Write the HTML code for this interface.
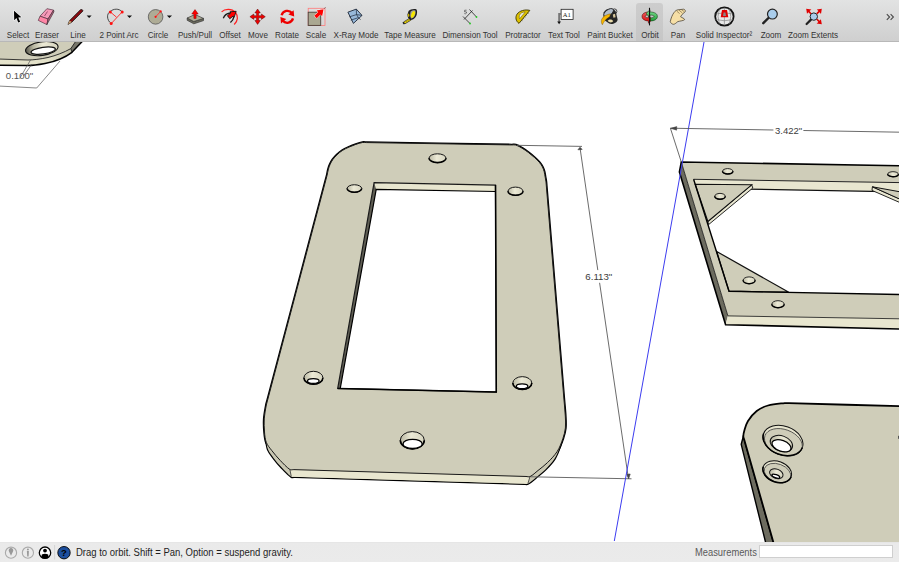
<!DOCTYPE html>
<html><head><meta charset="utf-8">
<style>
html,body{margin:0;padding:0;width:899px;height:562px;overflow:hidden;background:#fff;}
body{position:relative;font-family:"Liberation Sans",sans-serif;}
#tb{position:absolute;left:0;top:0;width:899px;height:42px;background:linear-gradient(#e2e3e3,#cfcfcf);border-bottom:1px solid #b8b8b8;box-sizing:border-box;}
.lb{position:absolute;top:30.2px;font-size:9px;color:#333;white-space:nowrap;transform:translateX(-50%) scaleX(0.9);line-height:10px;}
#sel{position:absolute;left:636.2px;top:3.4px;width:27.2px;height:37.6px;background:linear-gradient(#cdcdcd,#c6c6c6);border-radius:3px 3px 0 0;}
#sb{position:absolute;left:0;top:541.6px;width:899px;height:21px;background:linear-gradient(#e4e4e4,#eaeaea 1.5px,#ebebeb);}
#st{position:absolute;left:76.3px;top:547.3px;font-size:10px;color:#1e1e1e;white-space:nowrap;line-height:11px;transform:scaleX(0.95);transform-origin:0 0;}
#ms{position:absolute;left:694.8px;top:547.4px;font-size:10px;color:#5a5a5a;white-space:nowrap;line-height:11px;transform:scaleX(0.935);transform-origin:0 0;}
#mi{position:absolute;left:759px;top:544.5px;width:134px;height:13px;background:#fff;border:1px solid #cfcfcf;box-sizing:border-box;}
svg{position:absolute;left:0;top:0;}
</style></head><body>
<svg id="scene" width="899" height="562" viewBox="0 0 899 562" font-family="Liberation Sans">
<defs>
<linearGradient id="hg" x1="0" y1="0" x2="1" y2="0">
<stop offset="0" stop-color="#b9b7a2"/><stop offset="0.45" stop-color="#ecead6"/><stop offset="1" stop-color="#d6d4bf"/>
</linearGradient>
<linearGradient id="hg2" x1="0" y1="0" x2="1" y2="0"><stop offset="0" stop-color="#55544a"/><stop offset="0.25" stop-color="#b8b6a0"/><stop offset="0.55" stop-color="#ecead6"/><stop offset="1" stop-color="#d6d4bf"/></linearGradient>
<linearGradient id="fg" x1="0" y1="0" x2="1" y2="0">
<stop offset="0" stop-color="#d9d7c0"/><stop offset="0.1" stop-color="#e8e6cf"/><stop offset="0.9" stop-color="#e8e6cf"/><stop offset="1" stop-color="#c9c7b2"/>
</linearGradient>
</defs>
<defs><linearGradient id="bandg" x1="0" y1="0" x2="1" y2="0"><stop offset="0" stop-color="#e6e4cc"/><stop offset="0.6" stop-color="#e2e0c8"/><stop offset="1" stop-color="#b8b6a0"/></linearGradient></defs>
<path d="M-2,41.5 L82.2,41.5 L72,52.3 C65,57.5 55,61.5 45,63.5 C38,64.8 32,65.5 28,65.5 L-2,65.2 Z" fill="url(#bandg)"/>
<path d="M-2,41.5 L75.6,41.5 L70.8,48.6 C64,52.5 56,55.5 48,57.5 C40,59.2 33,60 28,60 L-2,59 Z" fill="#cfcdb9"/>
<path d="M75.6,41.5 L82.2,41.5 L72,52.3 L70.8,48.6 Z" fill="#77766a"/>
<path d="M-2,59 L28,60 C33,60 40,59.2 48,57.5 C56,55.5 64,52.5 70.8,48.6 L75.6,41.5 M70.8,48.6 L72,52.3" fill="none" stroke="#222" stroke-width="0.9"/>
<path d="M-2,65.2 L28,65.5 C32,65.5 38,64.8 45,63.5 C55,61.5 65,57.5 72,52.3 L82.2,41.5" fill="none" stroke="#000" stroke-width="1.5"/>
<ellipse cx="41.8" cy="48.6" rx="16.4" ry="6.8" transform="rotate(-8 41.8 48.6)" fill="url(#hg2)" stroke="#111" stroke-width="1.1"/>
<ellipse cx="43.2" cy="50.6" rx="12.3" ry="3.3" transform="rotate(-8 43.2 50.6)" fill="#fff" stroke="#111" stroke-width="1.2"/>
<path d="M30.5,60 L19.6,78.6 M32,64 L23.5,76 M60,61 L36.7,88 L-2,86" fill="none" stroke="#555" stroke-width="0.7"/>
<text x="5.8" y="79" font-size="9.6" fill="#555">0.100"</text>
<path d="M362.50,142.50 C363.80,142.28 365.17,142.54 366.50,142.57 C414.93,143.36 463.37,144.14 511.80,144.93 C513.13,144.96 514.56,144.61 515.80,145.00 C517.99,145.69 520.08,147.00 522.10,148.20 C524.28,149.50 526.37,150.97 528.40,152.50 C530.54,154.11 532.61,155.81 534.60,157.60 C536.25,159.08 537.88,160.61 539.30,162.30 C540.51,163.74 541.63,165.33 542.50,167.00 C543.26,168.47 543.78,170.10 544.20,171.70 C544.68,173.50 544.88,175.36 545.20,177.20 C545.48,178.76 545.80,180.33 546.00,181.90 C546.17,183.22 546.22,184.56 546.33,185.89 C552.11,255.93 557.89,325.97 563.67,396.01 C563.78,397.34 563.89,398.67 564.00,400.00 C564.43,405.33 565.03,410.66 565.30,416.00 C565.50,419.99 565.82,424.05 565.40,428.00 C565.02,431.55 564.08,435.11 562.90,438.50 C561.38,442.88 559.78,447.42 557.30,451.30 C554.68,455.42 551.09,459.03 547.60,462.50 C544.66,465.43 541.25,467.90 538.00,470.50 C535.38,472.60 532.86,475.17 530.00,476.60 C528.86,477.17 527.33,476.52 526.00,476.48 C448.63,474.19 371.27,471.91 293.90,469.62 C292.57,469.58 290.96,470.21 289.90,469.50 C286.39,467.14 283.26,463.60 280.20,460.40 C277.26,457.33 274.50,454.06 271.90,450.70 C269.86,448.06 267.50,445.43 266.30,442.40 C265.03,439.20 264.81,435.49 264.50,432.00 C264.11,427.66 263.91,423.24 264.20,418.90 C264.51,414.24 265.49,409.61 266.30,405.00 C266.53,403.69 266.98,402.42 267.32,401.13 C286.91,327.11 306.49,253.09 326.08,179.07 C326.42,177.78 326.80,176.50 327.10,175.20 C327.57,173.18 327.84,171.10 328.40,169.10 C328.84,167.50 329.40,165.91 330.10,164.40 C330.87,162.74 331.74,161.08 332.80,159.60 C334.00,157.92 335.40,156.33 336.90,154.90 C338.57,153.30 340.36,151.75 342.30,150.50 C344.39,149.15 346.72,148.13 349.00,147.10 C351.22,146.10 353.49,145.19 355.80,144.40 C357.99,143.65 360.23,142.89 362.50,142.50 Z" fill="none" stroke="#000" stroke-width="2.6"/>
<path d="M362.81,149.70 C364.09,149.48 365.44,149.74 366.75,149.77 C414.46,150.56 462.17,151.34 509.87,152.13 C511.19,152.16 512.59,151.81 513.81,152.20 C515.97,152.90 518.03,154.20 520.02,155.40 C522.17,156.70 524.23,158.17 526.22,159.70 C528.33,161.31 530.37,163.01 532.33,164.80 C533.95,166.28 535.56,167.81 536.96,169.50 C538.16,170.95 539.26,172.53 540.11,174.20 C540.87,175.67 541.37,177.30 541.79,178.90 C542.26,180.70 542.45,182.57 542.77,184.40 C543.04,185.97 543.36,187.53 543.56,189.10 C543.73,190.42 543.78,191.76 543.88,193.09 C549.58,263.13 555.27,333.17 560.97,403.21 C561.07,404.54 561.18,405.87 561.29,407.20 C561.72,412.53 562.31,417.86 562.57,423.20 C562.77,427.19 563.08,431.25 562.67,435.20 C562.30,438.75 561.37,442.31 560.21,445.70 C558.71,450.08 557.13,454.61 554.69,458.50 C552.11,462.61 548.58,466.22 545.14,469.70 C542.24,472.62 538.88,475.10 535.68,477.70 C533.10,479.80 530.62,482.37 527.80,483.80 C526.68,484.36 525.17,483.72 523.86,483.68 C447.65,481.39 371.45,479.11 295.24,476.82 C293.93,476.78 292.34,477.41 291.30,476.70 C287.84,474.33 284.76,470.79 281.75,467.60 C278.85,464.53 276.13,461.26 273.57,457.90 C271.56,455.26 269.24,452.63 268.06,449.60 C266.81,446.39 266.59,442.69 266.28,439.20 C265.90,434.86 265.70,430.44 265.99,426.10 C266.29,421.44 267.26,416.81 268.06,412.20 C268.28,410.89 268.73,409.62 269.06,408.33 C288.35,334.31 307.64,260.29 326.94,186.27 C327.27,184.98 327.65,183.70 327.94,182.40 C328.41,180.38 328.68,178.30 329.22,176.30 C329.66,174.70 330.21,173.11 330.90,171.60 C331.66,169.94 332.51,168.29 333.56,166.80 C334.74,165.12 336.12,163.53 337.60,162.10 C339.24,160.50 341.00,158.95 342.92,157.70 C344.97,156.35 347.27,155.33 349.51,154.30 C351.70,153.30 353.94,152.39 356.21,151.60 C358.37,150.85 360.58,150.09 362.81,149.70 Z" fill="none" stroke="#000" stroke-width="2.4"/>
<path d="M362.81,149.70 C364.09,149.48 365.44,149.74 366.75,149.77 C414.46,150.56 462.17,151.34 509.87,152.13 C511.19,152.16 512.59,151.81 513.81,152.20 C515.97,152.90 518.03,154.20 520.02,155.40 C522.17,156.70 524.23,158.17 526.22,159.70 C528.33,161.31 530.37,163.01 532.33,164.80 C533.95,166.28 535.56,167.81 536.96,169.50 C538.16,170.95 539.26,172.53 540.11,174.20 C540.87,175.67 541.37,177.30 541.79,178.90 C542.26,180.70 542.45,182.57 542.77,184.40 C543.04,185.97 543.36,187.53 543.56,189.10 C543.73,190.42 543.78,191.76 543.88,193.09 C549.58,263.13 555.27,333.17 560.97,403.21 C561.07,404.54 561.18,405.87 561.29,407.20 C561.72,412.53 562.31,417.86 562.57,423.20 C562.77,427.19 563.08,431.25 562.67,435.20 C562.30,438.75 561.37,442.31 560.21,445.70 C558.71,450.08 557.13,454.61 554.69,458.50 C552.11,462.61 548.58,466.22 545.14,469.70 C542.24,472.62 538.88,475.10 535.68,477.70 C533.10,479.80 530.62,482.37 527.80,483.80 C526.68,484.36 525.17,483.72 523.86,483.68 C447.65,481.39 371.45,479.11 295.24,476.82 C293.93,476.78 292.34,477.41 291.30,476.70 C287.84,474.33 284.76,470.79 281.75,467.60 C278.85,464.53 276.13,461.26 273.57,457.90 C271.56,455.26 269.24,452.63 268.06,449.60 C266.81,446.39 266.59,442.69 266.28,439.20 C265.90,434.86 265.70,430.44 265.99,426.10 C266.29,421.44 267.26,416.81 268.06,412.20 C268.28,410.89 268.73,409.62 269.06,408.33 C288.35,334.31 307.64,260.29 326.94,186.27 C327.27,184.98 327.65,183.70 327.94,182.40 C328.41,180.38 328.68,178.30 329.22,176.30 C329.66,174.70 330.21,173.11 330.90,171.60 C331.66,169.94 332.51,168.29 333.56,166.80 C334.74,165.12 336.12,163.53 337.60,162.10 C339.24,160.50 341.00,158.95 342.92,157.70 C344.97,156.35 347.27,155.33 349.51,154.30 C351.70,153.30 353.94,152.39 356.21,151.60 C358.37,150.85 360.58,150.09 362.81,149.70 Z" fill="#c9c7b2"/>
<path d="M289.9,469.5 L530,476.6 L527.8,483.8 L291.3,476.7 Z" fill="#e8e6cf"/>
<path d="M289.9,469.5 L291.3,476.7 M530,476.6 L527.8,483.8" stroke="#333" stroke-width="0.8"/>
<path d="M362.50,142.50 C363.80,142.28 365.17,142.54 366.50,142.57 C414.93,143.36 463.37,144.14 511.80,144.93 C513.13,144.96 514.56,144.61 515.80,145.00 C517.99,145.69 520.08,147.00 522.10,148.20 C524.28,149.50 526.37,150.97 528.40,152.50 C530.54,154.11 532.61,155.81 534.60,157.60 C536.25,159.08 537.88,160.61 539.30,162.30 C540.51,163.74 541.63,165.33 542.50,167.00 C543.26,168.47 543.78,170.10 544.20,171.70 C544.68,173.50 544.88,175.36 545.20,177.20 C545.48,178.76 545.80,180.33 546.00,181.90 C546.17,183.22 546.22,184.56 546.33,185.89 C552.11,255.93 557.89,325.97 563.67,396.01 C563.78,397.34 563.89,398.67 564.00,400.00 C564.43,405.33 565.03,410.66 565.30,416.00 C565.50,419.99 565.82,424.05 565.40,428.00 C565.02,431.55 564.08,435.11 562.90,438.50 C561.38,442.88 559.78,447.42 557.30,451.30 C554.68,455.42 551.09,459.03 547.60,462.50 C544.66,465.43 541.25,467.90 538.00,470.50 C535.38,472.60 532.86,475.17 530.00,476.60 C528.86,477.17 527.33,476.52 526.00,476.48 C448.63,474.19 371.27,471.91 293.90,469.62 C292.57,469.58 290.96,470.21 289.90,469.50 C286.39,467.14 283.26,463.60 280.20,460.40 C277.26,457.33 274.50,454.06 271.90,450.70 C269.86,448.06 267.50,445.43 266.30,442.40 C265.03,439.20 264.81,435.49 264.50,432.00 C264.11,427.66 263.91,423.24 264.20,418.90 C264.51,414.24 265.49,409.61 266.30,405.00 C266.53,403.69 266.98,402.42 267.32,401.13 C286.91,327.11 306.49,253.09 326.08,179.07 C326.42,177.78 326.80,176.50 327.10,175.20 C327.57,173.18 327.84,171.10 328.40,169.10 C328.84,167.50 329.40,165.91 330.10,164.40 C330.87,162.74 331.74,161.08 332.80,159.60 C334.00,157.92 335.40,156.33 336.90,154.90 C338.57,153.30 340.36,151.75 342.30,150.50 C344.39,149.15 346.72,148.13 349.00,147.10 C351.22,146.10 353.49,145.19 355.80,144.40 C357.99,143.65 360.23,142.89 362.50,142.50 Z" fill="#cfcdb9" stroke="#1a1a1a" stroke-width="1.0"/>
<path d="M374.1,182.7 L495.5,185.1 L496.3,392.1 L337.7,388.4 Z" fill="#fff"/>
<path d="M374.1,182.7 L495.5,185.1 L495.6,191.5 L375.5,189.4 Z" fill="#e8e6cf"/>
<path d="M374.1,182.7 L376.2,189.4 L340.2,388.6 L337.7,388.4 Z" fill="#5f5e54"/>
<path d="M375.5,189.4 L495.6,191.5 M376.2,189.4 L340.2,388.6" fill="none" stroke="#000" stroke-width="1.2"/>
<path d="M374.1,182.7 L495.5,185.1 L496.3,392.1 L337.7,388.4 Z" fill="none" stroke="#1a1a1a" stroke-width="1.2"/>
<path d="M337.7,388.4 L496.3,392.1 L495.5,185.1" fill="none" stroke="#000" stroke-width="1.5"/>
<ellipse cx="437.5" cy="158.2" rx="8.5" ry="4.4" fill="url(#hg)" stroke="#151515" stroke-width="1.0"/><path d="M429.0,158.2 A8.5,4.4 0 0 0 446.0,158.2" fill="none" stroke="#000" stroke-width="1.6"/>
<ellipse cx="354.4" cy="188.5" rx="7.3" ry="3.75" fill="url(#hg)" stroke="#151515" stroke-width="1.0"/><path d="M347.09999999999997,188.5 A7.3,3.75 0 0 0 361.7,188.5" fill="none" stroke="#000" stroke-width="1.6"/>
<ellipse cx="515.5" cy="191.2" rx="7.5" ry="4.1" fill="url(#hg)" stroke="#151515" stroke-width="1.0"/><path d="M508.0,191.2 A7.5,4.1 0 0 0 523.0,191.2" fill="none" stroke="#000" stroke-width="1.6"/>
<ellipse cx="313.4" cy="377.8" rx="9.5" ry="6.5" fill="url(#hg)" stroke="#151515" stroke-width="1.0"/><path d="M303.9,377.8 A9.5,6.5 0 0 0 322.9,377.8" fill="none" stroke="#000" stroke-width="1.6"/><ellipse cx="313.3" cy="381.0" rx="5.8" ry="2.4" fill="#fff" stroke="#000" stroke-width="1.3"/>
<ellipse cx="522.3" cy="383.1" rx="9.5" ry="6.45" fill="url(#hg)" stroke="#151515" stroke-width="1.0"/><path d="M512.8,383.1 A9.5,6.45 0 0 0 531.8,383.1" fill="none" stroke="#000" stroke-width="1.6"/><ellipse cx="522.1" cy="386.3" rx="5.8" ry="2.4" fill="#fff" stroke="#000" stroke-width="1.3"/>
<ellipse cx="412.3" cy="440.3" rx="12" ry="8.7" fill="url(#hg)" stroke="#151515" stroke-width="1.0"/><path d="M400.3,440.3 A12,8.7 0 0 0 424.3,440.3" fill="none" stroke="#000" stroke-width="1.6"/><ellipse cx="412.6" cy="443.9" rx="9.6" ry="4.6" fill="#fff" stroke="#000" stroke-width="1.3"/>
<g stroke="#5a5a5a" stroke-width="0.9" fill="none">
<path d="M517,145.3 L582,146.4 M531,476.8 L631.5,478.8"/>
<path d="M580.2,149 L597.8,270.1 M599.6,282.8 L628.2,477"/>
</g>
<path d="M580,147.2 L577.9,149.8 L582.2,149.4 Z M628.6,479 L626.8,474.3 L630.2,474 Z" fill="#444" stroke="#444" stroke-width="0.6"/>
<text x="585.3" y="280" font-size="9.7" fill="#3c3c3c">6.113"</text>
<path d="M681.3,162.0 L727.9,315.9 L725.6,324.7 L679.4,172.0 Z" fill="#6c6b5f"/>
<path d="M727.9,315.9 L900.0,318.8 L900.0,329.0 L725.6,324.7 Z" fill="#e8e6cf"/>
<path d="M681.3,162.0 L900.0,165.8 L900.0,318.8 L727.9,315.9 Z M693.6,179.3 L900.0,182.6 L900.0,294.5 L729.0,291.2 Z" fill="#cfcdb9" fill-rule="evenodd"/>
<path d="M681.3,162.0 L727.9,315.9 L900,318.8" fill="none" stroke="#111" stroke-width="0.8"/>
<path d="M900,165.8 L681.3,162 L679.4,172 L725.6,324.7 L900,329" fill="none" stroke="#000" stroke-width="1.6"/>
<path d="M693.6,179.3 L900.0,182.6 L900.0,191.8 L696.4,188.3 Z" fill="#e8e6d0"/>
<path d="M696.4,188.3 L900,191.8" fill="none" stroke="#111" stroke-width="1.2"/>
<path d="M751.7,184.8 L707.9,221.5 L708.6,224.6 L752.8,188.0 Z" fill="#e8e6d0" stroke="#111" stroke-width="0.9"/>
<path d="M695.2,184.2 L751.7,184.8 L707.9,221.5 Z" fill="#cfcdb9" stroke="#111" stroke-width="1.1"/>
<path d="M716.7,251.5 L729.0,291.2 L788.8,292.2 Z" fill="#cfcdb9" stroke="#111" stroke-width="1.2"/>
<path d="M900,182.6 L693.6,179.3" fill="none" stroke="#222" stroke-width="1"/><path d="M693.6,179.3 L729.0,291.2 L900,294.5" fill="none" stroke="#000" stroke-width="1.4"/>
<path d="M872.4,186.8 L900.0,199.2 L900.0,202.6 L872.0,190.4 Z" fill="#e8e6d0" stroke="#111" stroke-width="0.9"/>
<path d="M872.4,186.8 L900.0,191.8 L900.0,199.2 Z" fill="#cfcdb9" stroke="#111" stroke-width="1"/>
<ellipse cx="727.7" cy="171.3" rx="5.2" ry="2.7" fill="url(#hg)" stroke="#151515" stroke-width="0.9"/><path d="M722.5,171.3 A5.2,2.7 0 0 0 732.9000000000001,171.3" fill="none" stroke="#000" stroke-width="1.4400000000000002"/>
<ellipse cx="893" cy="174.2" rx="5.4" ry="2.5" fill="url(#hg)" stroke="#151515" stroke-width="0.9"/><path d="M887.6,174.2 A5.4,2.5 0 0 0 898.4,174.2" fill="none" stroke="#000" stroke-width="1.4400000000000002"/>
<ellipse cx="720" cy="196.3" rx="5.3" ry="2.9" fill="url(#hg)" stroke="#151515" stroke-width="0.9"/><path d="M714.7,196.3 A5.3,2.9 0 0 0 725.3,196.3" fill="none" stroke="#000" stroke-width="1.4400000000000002"/>
<ellipse cx="749.1" cy="280.3" rx="6" ry="3.4" fill="url(#hg)" stroke="#151515" stroke-width="0.9"/><path d="M743.1,280.3 A6,3.4 0 0 0 755.1,280.3" fill="none" stroke="#000" stroke-width="1.4400000000000002"/>
<ellipse cx="778" cy="304.2" rx="6.2" ry="3.5" fill="url(#hg)" stroke="#151515" stroke-width="0.9"/><path d="M771.8,304.2 A6.2,3.5 0 0 0 784.2,304.2" fill="none" stroke="#000" stroke-width="1.4400000000000002"/>
<path d="M743.3,436.3 L775.0,548.0 L767.0,548.0 L741.2,444.3 Z" fill="#6d6c5f" stroke="#000" stroke-width="1.4"/>
<path d="M905.00,406.30 C866.33,405.27 827.67,404.23 789.00,403.20 C787.57,403.16 786.12,402.94 784.70,403.10 C779.12,403.71 773.35,403.99 768.00,405.50 C764.02,406.62 759.94,408.49 756.70,411.00 C753.28,413.65 750.35,417.34 748.00,421.00 C746.29,423.67 745.44,426.94 744.50,430.00 C743.87,432.04 743.32,434.22 743.30,436.30 C743.29,437.60 744.03,438.87 744.39,440.15 C754.23,474.82 764.07,509.48 773.91,544.15 C774.27,545.43 774.64,546.72 775.00,548.00 L905,548 Z" fill="#cfcdb9" stroke="#000" stroke-width="1.8"/>
<ellipse cx="783" cy="440.5" rx="20.6" ry="14.4" transform="rotate(20 783 440.5)" fill="#e6e4ce" stroke="#111" stroke-width="1"/><ellipse cx="783.4" cy="442.3" rx="19.6" ry="12.8" transform="rotate(20 783.4 442.3)" fill="#cfcdb9" stroke="#333" stroke-width="0.7"/><path d="M762.4,440.5 A20.6,14.4 0 0 0 803.6,440.5" transform="rotate(20 783 440.5)" fill="none" stroke="#000" stroke-width="1.5"/><ellipse cx="781.4" cy="443.5" rx="11.6" ry="7.6" transform="rotate(20 781.4 443.5)" fill="url(#hg)" stroke="#111" stroke-width="1"/><ellipse cx="781.5" cy="445.8" rx="10" ry="5.4" transform="rotate(20 781.5 445.8)" fill="#fff" stroke="#000" stroke-width="1.3"/>
<ellipse cx="777.2" cy="471.7" rx="14.8" ry="10.4" transform="rotate(20 777.2 471.7)" fill="#e6e4ce" stroke="#111" stroke-width="1"/><ellipse cx="777.5" cy="473" rx="13.8" ry="9" transform="rotate(20 777.5 473)" fill="#cfcdb9" stroke="#333" stroke-width="0.7"/><path d="M762.4000000000001,471.7 A14.8,10.4 0 0 0 792.0,471.7" transform="rotate(20 777.2 471.7)" fill="none" stroke="#000" stroke-width="1.5"/><ellipse cx="776.3" cy="473.7" rx="7" ry="4.6" transform="rotate(20 776.3 473.7)" fill="url(#hg)" stroke="#111" stroke-width="1"/><ellipse cx="775.8" cy="476.2" rx="4.1" ry="1.6" transform="rotate(20 775.8 476.2)" fill="#fff" stroke="#000" stroke-width="1.3"/>
<rect x="898" y="435.8" width="1.2" height="3" fill="#555"/>
<path d="M704.2,41 L614.3,541" stroke="#3c3cf0" stroke-width="1" fill="none"/>
<g stroke="#5a5a5a" stroke-width="0.9" fill="none">
<path d="M670.4,128.2 L773.4,130 M803.4,130.5 L900,132.2 M670.4,128.2 L681.3,162"/>
</g>
<path d="M670.6,128.3 L676.8,126.6 L676.6,130.2 Z" fill="#444" stroke="#444" stroke-width="0.5"/>
<text x="775" y="133.5" font-size="9.5" fill="#3c3c3c">3.422"</text>
</svg>
<div id="tb"></div>
<div id="sel"></div>
<div class="lb" style="left:17.5px">Select</div>
<div class="lb" style="left:46.5px">Eraser</div>
<div class="lb" style="left:77.5px">Line</div>
<div class="lb" style="left:118.5px">2 Point Arc</div>
<div class="lb" style="left:157.5px">Circle</div>
<div class="lb" style="left:195px">Push/Pull</div>
<div class="lb" style="left:229.5px">Offset</div>
<div class="lb" style="left:257.5px">Move</div>
<div class="lb" style="left:286.5px">Rotate</div>
<div class="lb" style="left:316px">Scale</div>
<div class="lb" style="left:355.5px">X-Ray Mode</div>
<div class="lb" style="left:409.5px">Tape Measure</div>
<div class="lb" style="left:469.5px">Dimension Tool</div>
<div class="lb" style="left:522.5px">Protractor</div>
<div class="lb" style="left:563.5px">Text Tool</div>
<div class="lb" style="left:609.5px">Paint Bucket</div>
<div class="lb" style="left:650px">Orbit</div>
<div class="lb" style="left:677.5px">Pan</div>
<div class="lb" style="left:724px">Solid Inspector²</div>
<div class="lb" style="left:770.5px">Zoom</div>
<div class="lb" style="left:813px">Zoom Extents</div>
<svg width="899" height="41" viewBox="0 0 899 41" style="position:absolute;left:0;top:0">
<defs>
<linearGradient id="selg" x1="0" y1="0" x2="0" y2="1"><stop offset="0" stop-color="#d2d2d2"/><stop offset="1" stop-color="#c3c3c3"/></linearGradient>
</defs>
<!-- Select -->
<path d="M14,10.8 L14.2,20.2 L16.5,18.1 L18.2,22.6 L20.1,21.8 L18.3,17.4 L21.4,17.2 Z" fill="#fff" stroke="#fff" stroke-width="1.2" stroke-linejoin="round" opacity="0.8"/>
<path d="M14,10.8 L14.2,20.2 L16.5,18.1 L18.2,22.6 L20.1,21.8 L18.3,17.4 L21.4,17.2 Z" fill="#000"/>
<!-- Eraser -->
<path d="M40,16.2 L46.9,8.7 L53.6,10.1 L48,19 Z" fill="#f49ab8" stroke="#503040" stroke-width="0.7"/>
<path d="M40,16.2 L48,19 L46.9,24.6 L38.3,20.4 Z" fill="#ff86a6" stroke="#503040" stroke-width="0.7"/>
<path d="M48,19 L53.6,10.1 L53.9,11.8 L46.9,24.6 Z" fill="#c06080" stroke="#403038" stroke-width="0.7"/>
<path d="M47.5,11.5 L44.5,16" stroke="#a05070" stroke-width="1"/>
<!-- Line pencil -->
<path d="M68,24.4 L69.6,20.6 L80.6,9.6 Q82.6,9.2 83,10.9 L72,22 Z" fill="#8a0a10" stroke="#1a1a1a" stroke-width="0.8" stroke-linejoin="round"/>
<path d="M68,24.4 L69.6,20.6 L71.8,22 Z" fill="#c8a070"/>
<path d="M86.6,15.6 L91.6,15.6 L89.1,18 Z" fill="#111"/>
<!-- 2 point arc -->
<path d="M111.2,23.6 C106.5,20 106.5,13.5 110.3,11.5 C113.5,8.5 119,8.2 122.2,11.9" fill="none" stroke="#222" stroke-width="0.8"/>
<path d="M110.3,11.9 L116.6,17.3 M122.2,11.9 L111.2,23.6" stroke="#ff2020" stroke-width="0.9"/>
<circle cx="110.3" cy="11.9" r="1.5" fill="#ff1010"/><circle cx="122.2" cy="11.9" r="1.5" fill="#ff1010"/><circle cx="111.2" cy="23.6" r="1.5" fill="#ff1010"/>
<path d="M127,15.6 L132,15.6 L129.5,18 Z" fill="#111"/>
<!-- Circle -->
<circle cx="155.6" cy="16.85" r="7.3" fill="#aeac96" stroke="#555" stroke-width="0.8"/>
<path d="M155.6,16.85 L160.7,11.4" stroke="#ff3030" stroke-width="0.9"/>
<circle cx="155.6" cy="16.85" r="1.1" fill="#ff1010"/><circle cx="160.7" cy="11.4" r="1.1" fill="#ff1010"/>
<path d="M166.9,15.6 L172,15.6 L169.4,18 Z" fill="#111"/>
<!-- Push/Pull -->
<path d="M187.2,18 L193.8,21.5 L203.5,18.4 L203.5,20.6 L193.8,23.8 L187.2,20.3 Z" fill="#6b6a5c" stroke="#333" stroke-width="0.7"/>
<path d="M187.2,18 L195,14.5 L203.5,18.4 L193.8,21.5 Z" fill="#aeac96" stroke="#333" stroke-width="0.7"/>
<path d="M193.9,18.4 L193.9,14 L191.8,14 L195,9.6 L198.2,14 L196.1,14 L196.1,18.4 Z" fill="#ff0000" stroke="#800" stroke-width="0.5"/>
<!-- Offset -->
<path d="M221.6,11.9 C224.6,8.9 231.4,7.9 235.6,12.6 C238.2,15.6 238.2,21 234.2,24.5" fill="none" stroke="#ff2020" stroke-width="1.2"/>
<path d="M223.3,18.3 Q225,13.8 230,13 M230.4,22.4 Q233.4,20 233.8,16.8" fill="none" stroke="#1a1a1a" stroke-width="1.3"/>
<path d="M0,-1.9 L4.4,-1.9 L4.4,-3.4 L9.6,0 L4.4,3.4 L4.4,1.9 L0,1.9 Z" transform="translate(228.6,17.2) rotate(-38)" fill="#ff0000" stroke="#111" stroke-width="0.8" stroke-linejoin="round"/>
<!-- Move -->
<path d="M257.6,9 L260.3,12.9 L258.65,12.9 L258.65,15.65 L261.4,15.65 L261.4,14 L265.3,16.7 L261.4,19.4 L261.4,17.75 L258.65,17.75 L258.65,20.5 L260.3,20.5 L257.6,24.4 L254.9,20.5 L256.55,20.5 L256.55,17.75 L253.8,17.75 L253.8,19.4 L249.9,16.7 L253.8,14 L253.8,15.65 L256.55,15.65 L256.55,12.9 L254.9,12.9 Z" fill="#f00000" stroke="#4a0000" stroke-width="0.45" stroke-linejoin="round"/>
<!-- Rotate -->
<path d="M281.6,15.2 A6,6 0 0 1 292,13" fill="none" stroke="#ee0000" stroke-width="2.3"/>
<path d="M293.6,10.2 L294.2,16.6 L288.4,14.6 Z" fill="#ee0000"/>
<path d="M293,18.4 A6,6 0 0 1 282.6,20.6" fill="none" stroke="#ee0000" stroke-width="2.3"/>
<path d="M281,23.4 L280.4,17 L286.2,19 Z" fill="#ee0000"/>
<!-- Scale -->
<rect x="308.2" y="8.3" width="16.8" height="17.1" fill="none" stroke="#ff7a7a" stroke-width="0.8"/>
<rect x="308.2" y="12.2" width="12.5" height="13.2" fill="#aaa892" stroke="#4a4038" stroke-width="0.9"/>
<path d="M0,-1.7 L5.2,-1.7 L5.2,-4 L11,0 L5.2,4 L5.2,1.7 L0,1.7 Z" transform="translate(315.6,17) rotate(-44)" fill="#ff0000" stroke="#fff" stroke-width="0.9" stroke-linejoin="round"/><path d="M0,-1.7 L5.2,-1.7 L5.2,-4 L11,0 L5.2,4 L5.2,1.7 L0,1.7 Z" transform="translate(315.6,17) rotate(-44)" fill="#ff0000"/><path d="M324.4,8.4 L325.2,7.6" stroke="#111" stroke-width="1"/>
<!-- X-Ray -->
<path d="M347.9,12.2 L356.3,9.1 L362,15.4 L353.4,23.4 Z" fill="#98b9da" stroke="#1e2838" stroke-width="0.9" stroke-linejoin="round"/>
<path d="M356.3,9.1 L356.5,14.6 M349.2,16.9 L356.5,14.6 L362,15.4 M350.8,20.2 L358.4,17.6 L360.6,19.6 M356.5,14.6 L358.4,17.6" fill="none" stroke="#1e2838" stroke-width="0.7"/>
<!-- Tape -->
<path d="M409.4,18.4 L410.9,20.2 L405,23.8 L403.5,22 Z" fill="#f0d800" stroke="#111" stroke-width="0.6"/>
<path d="M405.6,20.8 L407,22.5 M407.4,19.7 L408.8,21.4" stroke="#333" stroke-width="0.5"/>
<path d="M403.5,22 L405,23.8 L403.9,24.6 L402.4,22.8 Z" fill="#111"/>
<path d="M408.6,11 C409.8,9.2 414.6,8.4 416.5,9.4 C417.6,10.8 417,15 415.6,17 C414.2,19 411.6,20.3 410.2,19.9 C408.5,19.3 407.3,16.6 407.5,14.5 Z" fill="#1e1e1e"/>
<path d="M410.6,11.6 C411.9,10.4 414.5,10 415.4,10.6 C415.9,11.8 415.5,14.6 414.5,16.2 C413.5,17.8 411.7,18.7 411,18.4 C410.2,17.6 409.9,13.9 410.6,11.6 Z" fill="#a0a0a0"/>
<ellipse cx="413" cy="14.4" rx="1.7" ry="3.5" transform="rotate(22 413 14.4)" fill="#f4e600"/>
<ellipse cx="408.6" cy="15.2" rx="0.8" ry="1.8" fill="#c8b400"/>
<!-- Dimension -->
<path d="M463,16.5 L470,23.5 M469.5,9.5 L476.5,17 M464,19.5 L472.5,10.5" fill="none" stroke="#222" stroke-width="0.8"/>
<circle cx="470" cy="23.5" r="0.9" fill="#22cc22"/><circle cx="476.5" cy="17" r="0.9" fill="#22cc22"/>
<path d="M466.6,10.2 L464.7,10.2 L464.5,11.8 Q467,11.3 466.6,13 Q466.2,14.2 464.3,13.6" fill="none" stroke="#333" stroke-width="0.6"/>
<!-- Protractor -->
<path d="M519,23.4 L529.8,10.4 C525,9.2 519.5,10.6 517,14.2 C515.2,17 515.6,21 519,23.4 Z" fill="#dcc000" stroke="#3a3300" stroke-width="0.9" stroke-linejoin="round"/>
<path d="M519.6,18.8 L525.2,11.9 C522.4,12 520.2,13.4 519.5,15.2 C519.1,16.4 519.2,17.8 519.6,18.8 Z" fill="#ecebe2" stroke="#5a5000" stroke-width="0.5"/>
<path d="M521.5,20 L522.6,20.8 M523,18.2 L524.1,19 M524.5,16.4 L525.6,17.2 M526,14.6 L527.1,15.4 M527.5,12.8 L528.6,13.6" stroke="#4a4000" stroke-width="0.5"/>
<!-- Text tool -->
<rect x="561.1" y="9.3" width="12" height="10.1" fill="#fff" stroke="#222" stroke-width="0.8"/>
<text x="562.8" y="16.7" font-size="6.6" font-family="Liberation Serif" fill="#222">A1</text>
<path d="M561,14 L559.1,14 L559.1,22.2" fill="none" stroke="#777" stroke-width="1.8"/>
<path d="M557.2,21.6 L561,21.6 L559.1,24.2 Z" fill="#111"/>
<!-- Paint bucket -->
<path d="M603.8,12.2 C606,8.4 612,7.6 615.6,11 L617.6,19.4 C617.2,23 612.4,24.6 609.2,23.6 L603.4,19.4 Z" fill="#262626"/>
<circle cx="614.4" cy="11.4" r="2.5" fill="none" stroke="#222" stroke-width="0.8"/>
<ellipse cx="608.6" cy="12.6" rx="5.6" ry="2.9" transform="rotate(-36 608.6 12.6)" fill="#b3becb" stroke="#1e1e1e" stroke-width="0.8"/>
<path d="M607.6,20.8 C609.4,18.8 612.2,19.2 613.2,21 C612.6,22.8 609.4,23.2 607.6,20.8 Z" fill="#e9dcaa"/>
<path d="M612.8,14.6 L615,13.8 L615.6,17.2 L613.4,17.8 Z" fill="#d6c69c"/>
<path d="M610.4,13.8 C607,14.4 603,16 601.6,19.4 C601,21.4 601.4,23.4 602.4,24.8 C603.6,22 605.4,19.4 609.8,16.6 Z" fill="#f4b400" stroke="#5a3c00" stroke-width="0.35"/>
<!-- Orbit -->
<linearGradient id="og" x1="0" y1="0" x2="0" y2="1"><stop offset="0" stop-color="#86e69a"/><stop offset="1" stop-color="#1f9a36"/></linearGradient>
<linearGradient id="orr" x1="0" y1="0" x2="0" y2="1"><stop offset="0" stop-color="#e85a5a"/><stop offset="1" stop-color="#e00a0a"/></linearGradient>
<path d="M649.4,12 C644.6,11.8 642,13.8 642,16.4 C642,19.2 645,20.9 648.4,21 L648.4,23.2 L652.4,19.4 L648.4,15.6 L648.4,17.8 C646.2,17.8 645.2,17.2 645.2,16.4 C645.2,15.4 646.8,14.8 649.4,15 Z" fill="url(#orr)" stroke="#3a0000" stroke-width="0.5" stroke-linejoin="round"/>
<path d="M650,12 L650,9.8 L646,13.6 L650,17.4 L650,15.1 C652.8,15.1 654,15.6 654,16.4 C654,17.4 652.8,17.8 650.5,17.9 L650.5,21 C654.8,20.9 657.4,19 657.4,16.4 C657.4,13.6 654.4,12 650,12 Z" fill="url(#og)" stroke="#002a00" stroke-width="0.5" stroke-linejoin="round"/>
<path d="M649.5,7.8 L649.5,25.4" stroke="#111" stroke-width="1.1"/>
<!-- Pan -->
<path d="M670.3,21.6 C671,18 672.5,14.5 674,12.6 C675,11 676.5,10 678,9.8 L683.6,9.2 C684.8,9.4 685.6,10.5 685.3,11.6 L682,14.5 L680.6,16.8 C682,17.8 684.6,18.4 684.6,19.6 C684.2,20.6 680,21 677.8,21.6 C676.5,22.6 675,24.2 673.6,24.3 C672,24.2 670.6,23 670.3,21.6 Z" fill="#f6dfa6" stroke="#3c3426" stroke-width="0.7" stroke-linejoin="round"/>
<path d="M676.8,11.2 L679.6,13.6 M679,10.2 L682.2,12.8 M681.4,9.6 L684.2,11.6" fill="none" stroke="#6a5a3a" stroke-width="0.6"/>
<!-- Solid inspector -->
<circle cx="724.4" cy="16.5" r="9.2" fill="#e8e8e8" stroke="#111" stroke-width="1.8"/>
<path d="M715.6,14 Q724.4,11.5 733.2,14 M715.5,19.5 Q724.4,22 733.3,19.5 M719.5,8.6 Q716.5,16.5 719.5,24.4 M729.3,8.6 Q732.3,16.5 729.3,24.4 M724.4,7.5 L724.4,25.5" fill="none" stroke="#777" stroke-width="0.6"/>
<path d="M722,10 L727,10 L728.3,17.2 L720.7,17.2 Z" fill="#e00000"/>
<path d="M723.6,12.5 L725.4,12.5 L726,16 L723,16 Z" fill="#888"/>
<!-- Zoom -->
<path d="M768.4,18 L763.3,23.2" stroke="#222" stroke-width="2.4" stroke-linecap="round"/>
<circle cx="772.4" cy="14.1" r="4.9" fill="#a9cdec" stroke="#222" stroke-width="1.2"/>
<!-- Zoom extents -->
<path d="M811,19.6 L806.6,24" stroke="#222" stroke-width="2.2" stroke-linecap="round"/>
<circle cx="813.8" cy="16.6" r="3.7" fill="#a9cdec" stroke="#222" stroke-width="1"/>
<path d="M806.2,8.8 L811.4,9.6 L809.6,11 L811.5,13.2 L810.4,14.2 L808.4,12.2 L807,13.8 Z" fill="#e00000"/>
<path d="M821.8,8.8 L821,14 L819.6,12.2 L817.4,14.2 L816.4,13.1 L818.4,11 L816.8,9.6 Z" fill="#e00000"/>
<path d="M821.8,24.2 L816.6,23.4 L818.4,22 L816.4,19.8 L817.5,18.8 L819.5,20.8 L820.9,19.2 Z" fill="#e00000"/>
<!-- >> -->
<path d="M886.8,14.2 L889.6,17 L886.8,19.8 M890.6,14.2 L893.4,17 L890.6,19.8" fill="none" stroke="#4a4a4a" stroke-width="1.1"/>
</svg>

<div id="sb"></div>
<svg width="899" height="21" viewBox="0 541 899 21" style="position:absolute;left:0;top:541px">
<circle cx="11" cy="552.7" r="5.6" fill="none" stroke="#aaa" stroke-width="1.1"/>
<path d="M11,555.8 L9,551.5 A2.3,2.3 0 1 1 13,551.5 Z" fill="#999"/>
<circle cx="27.9" cy="552.7" r="5.6" fill="none" stroke="#aaa" stroke-width="1.1"/>
<circle cx="27.9" cy="549.6" r="1" fill="#999"/><path d="M26.9,551 L28.9,551 L28.6,556.6 L27.2,556.6 Z" fill="#999"/>
<circle cx="45" cy="552.7" r="5.7" fill="#fff" stroke="#000" stroke-width="1.3"/>
<circle cx="45" cy="550.6" r="1.9" fill="#000"/><path d="M41.4,557.4 L41.8,554.6 Q45,553 48.2,554.6 L48.6,557.4 Q45,559.2 41.4,557.4 Z" fill="#000"/>
<path d="M54.6,545 L54.6,559.5" stroke="#d4d4d4" stroke-width="1"/>
<circle cx="64" cy="552.7" r="6.2" fill="#1d4f9e" stroke="#000" stroke-width="0.9"/>
<text x="64" y="556.3" font-size="9.5" font-weight="bold" text-anchor="middle" fill="#000" font-family="Liberation Sans">?</text>
</svg>

<div id="st">Drag to orbit. Shift = Pan, Option = suspend gravity.</div>
<div id="ms">Measurements</div>
<div id="mi"></div>
</body></html>
